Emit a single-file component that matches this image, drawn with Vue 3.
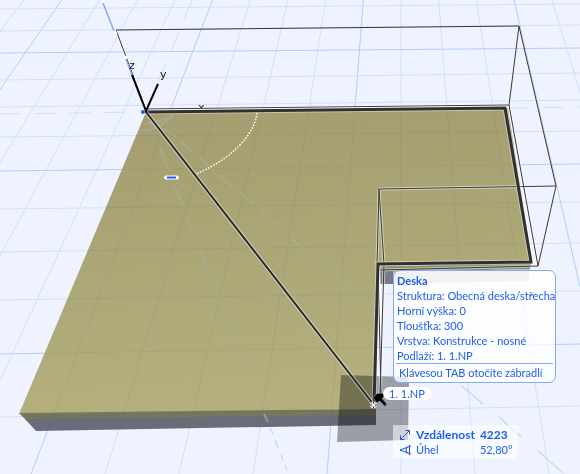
<script setup>
const vertical = Array.from({ length: 20 }, (_, i) => i - 15).map((k) => ({
  id: k,
  major: (k + 21) % 4 === 0,
  x1: 401 + 37.7 * k,
  x2: 401 + 74 * k,
}))

const horizontal = [
  [9, 4], [31, 25], [53, 48, true], [80, 73], [107, 100], [137, 131],
  [171, 164, true], [209, 202], [252, 243], [300, 291], [354, 344, true], [417, 406],
].map(([y1, y2, major]) => ({ y1, y2, major: !!major }))

const properties = [
  ['Struktura', 'Obecná deska/střecha'],
  ['Horní výška', '0'],
  ['Tloušťka', '300'],
  ['Vrstva', 'Konstrukce - nosné'],
  ['Podlaží', '1. 1.NP'],
]
</script>

<template>
  <main class="viewport">
    <svg class="scene" viewBox="0 0 580 474" role="img" aria-label="Deska">
      <defs>
        <linearGradient id="top" x1="0" y1="0" x2="0.15" y2="1">
          <stop offset="0" stop-color="#a39d6f" />
          <stop offset="1" stop-color="#b4af7d" />
        </linearGradient>
        <clipPath id="slabClip">
          <path d="M146 112L508 108L532 262L378 264L376 425L36 431L19 413Z" />
        </clipPath>
        <g id="grid">
          <line v-for="l in vertical" :key="l.id" :x1="l.x1" y1="0" :x2="l.x2" y2="474" :class="{ major: l.major }" />
          <line v-for="l in horizontal" :key="l.y1" x1="0" :y1="l.y1" x2="580" :y2="l.y2" :class="{ major: l.major }" />
        </g>
      </defs>

      <rect width="580" height="474" fill="#eef3ff" />
      <use href="#grid" class="grid" />
      <path class="axis" d="M0 114L146 112M508 108L580 107M192 0L146 112" />
      <path class="axis-near" d="M462 386L483 404M499 417L521 437M538 451L563 473M430 360L440 368M270 428L273 434M275 440L278 448M281 455L283 460M285 465L287 470" />

      <path d="M146 112L508 108L532 262L378 264L376 409L19 414Z" fill="url(#top)" />
      <path d="M19 413L376 409V416L26 420Z" fill="#77775f" />
      <path d="M25 419L376 415V425L36 431Z" fill="#696c79" />
      <path d="M379 266L531 263L530 269L380 272Z" fill="#8d8a68" />
      <path d="M380 272L530 269L528 281L380 284Z" fill="#c3c5cb" />
      <path d="M380 271H393V284H380Z" fill="#777a86" />
      <use href="#grid" class="grid inner" clip-path="url(#slabClip)" />

      <path class="guide" d="M160 148L169 170M175 187L183 206M188 220L195 237M200 250L207 267M211 279L217 293M221 302L226 316M229 325L235 338M238 346L243 357M246 365L249 375M251 382L256 391M258 399L262 408M264 414L268 422" />
      <path class="guide" d="M163 128L176 137M180 141L196 154M200 158L212 168M218 175L234 188M239 191L254 204M261 211L280 227M290 237L304 249M310 253L330 271M336 277L356 293M363 300L376 311" />
      <path class="guide" d="M139 130Q160 132 172 114M146 124L174 117M149 133L154 119" />

      <path d="M341 375L409 377L408 440L337 442Z" fill="#000" opacity=".35" />

      <g class="thin">
        <path class="halo" d="M116 30L146 110L509 105L538 266L380 270M379 189L556 186M379 189L377 264M379 189L384 264L380 395M379 264L381 395" />
        <path d="M116 30L519 26L556 186L538 266L380 270M519 26L509 105L538 266M146 109L509 105M116 30L146 110M556 186L379 189L377 264M379 189L384 264L380 395M378 266L381 395" />
      </g>
      <g class="edge">
        <path class="halo" d="M146 112L505 108L531 262L378 264L374 405" />
        <path d="M146 112L505 108L531 262L378 264L374 405" />
      </g>
      <g class="diagonal">
        <path class="halo" d="M146 112L374 405" />
        <path d="M146 112L374 405" />
      </g>

      <path d="M257 113C254 136 231 159 196 174" class="arc" />
      <path d="M102 1L103 3M114 30L116 34M125 56L126 59" class="tick-halo" />
      <path d="M103 3L114 31M126 59L132 75" class="tick" />
      <path d="M132 75L146 111L158 84" class="tripod" />
      <text x="129" y="69" class="letter">z</text>
      <text x="160" y="78" class="letter">y</text>
      <svg x="195" y="102" width="12" height="6"><text x="3" y="9" class="letter">x</text></svg>
      <circle cx="143" cy="112" r="2" fill="#2460f0" />
      <path d="M166 177.500H177" stroke="#fff" stroke-width="4" stroke-linecap="round" />
      <path d="M167 177.500H176" stroke="#1f5ef5" stroke-width="2" />

      <circle cx="373.500" cy="405" r="3.500" fill="#fff" />
      <path class="cursor" d="M370 405H372M375 405H377M373.500 401.500V403.500M373.500 406.500V408.500M371 402.500L372 403.500M376 402.500L375 403.500M371 407.500L372 406.500M376 407.500L375 406.500" />
      <path d="M373 398L377 393.500L384 393L385.500 395L382 398.500L387 404L385 406.500L379.500 401L377 403Z" fill="#000" stroke="#ddd" stroke-width=".4" />
    </svg>

    <section class="info">
      <h1>Deska</h1>
      <p v-for="[name, value] in properties" :key="name">{{ name }}: {{ value }}</p>
      <p class="hint">Klávesou TAB otočíte zábradlí</p>
    </section>

    <span class="storey">1. 1.NP</span>

    <dl class="tracker">
      <svg viewBox="0 0 12 12" class="icon"><path d="M1.500 10.500L10.500 1.500M6.500 1.500H10.500V5.500M1.500 6.500V10.500H5.500" /></svg>
      <dt class="strong">Vzdálenost</dt>
      <dd class="strong">4223</dd>
      <svg viewBox="0 0 12 12" class="icon"><path d="M12 2L1 6L12 10M8 2.500Q6 6 8 9.500M10.500 1V11" /></svg>
      <dt>Úhel</dt>
      <dd>52,80°</dd>
    </dl>
  </main>
</template>

<style>
body {
  margin: 0;
}
</style>

<style scoped>
.viewport {
  position: relative;
  overflow: hidden;
  color: #1f5ef5;
  font: 11px/15px Lato, "Open Sans", sans-serif;
}
.scene {
  display: block;
  width: 100%;
  height: auto;
}
.grid {
  stroke: #d3e0fc;
  stroke-width: 1;
}
.major {
  stroke: #b3cdfd;
}
.inner {
  opacity: 0.2;
  stroke: #b9c6e6;
  mix-blend-mode: multiply;
}
.axis {
  fill: none;
  stroke: #cfe1f5;
  stroke-dasharray: 20 15;
}
.axis-near {
  stroke: #c4daf6;
  stroke-width: 1.5;
}
.guide {
  fill: none;
  stroke: #a6ac9b;
  stroke-width: 2;
  opacity: 0.7;
}
.thin path,
.edge path,
.diagonal path {
  fill: none;
  stroke: #383838;
  stroke-width: 1;
}
.edge path {
  stroke: #303030;
  stroke-width: 3;
}
.diagonal path {
  stroke: #282828;
  stroke-width: 2;
}
.thin .halo {
  stroke: #fff;
  stroke-width: 3;
  opacity: 0.5;
}
.edge .halo {
  stroke: #fff;
  stroke-width: 5;
  opacity: 0.4;
}
.diagonal .halo {
  stroke: #fff;
  stroke-width: 4;
  opacity: 0.5;
}
.arc {
  fill: none;
  stroke: #fff;
  stroke-width: 1.5;
  stroke-dasharray: 1.5 1.5;
}
.tick-halo {
  stroke: #fff;
  stroke-width: 3;
}
.tick {
  stroke: #86a8f8;
  stroke-width: 1.5;
  fill: none;
}
.tripod {
  fill: none;
  stroke: #000;
  stroke-width: 2;
}
.letter {
  font: 11px "DejaVu Sans", sans-serif;
  fill: #111;
}
.cursor {
  stroke: #222;
}
.info {
  position: absolute;
  left: 393px;
  top: 270px;
  box-sizing: border-box;
  width: 163px;
  padding: 3px 0 0 3px;
  border: 1px solid #83a9fa;
  border-radius: 7px;
  background: rgba(255, 255, 255, 0.78);
  white-space: nowrap;
}
.info h1,
.info p {
  margin: 0;
  font-size: 11px;
  line-height: 15px;
}
.info h1 {
  line-height: 14px;
}
.info .hint {
  margin: 0 2px 0 -1px;
  padding: 1px 0 2px 3px;
  border-top: 1px solid #83a9fa;
}
.storey {
  position: absolute;
  left: 383px;
  top: 387px;
  padding: 0 7px 0 6px;
  border-radius: 7px;
  background: #fff;
  line-height: 13px;
}
.tracker {
  position: absolute;
  left: 393px;
  top: 425px;
  display: grid;
  grid-template-columns: 12px auto auto;
  align-items: center;
  column-gap: 5px;
  margin: 0;
  padding: 2px 6px;
  background: rgba(255, 255, 255, 0.55);
}
.tracker dd {
  margin: 0;
}
.strong {
  font-size: 12px;
  font-weight: 700;
}
.icon {
  width: 12px;
  height: 12px;
  fill: none;
  stroke: #2456d0;
}
</style>
